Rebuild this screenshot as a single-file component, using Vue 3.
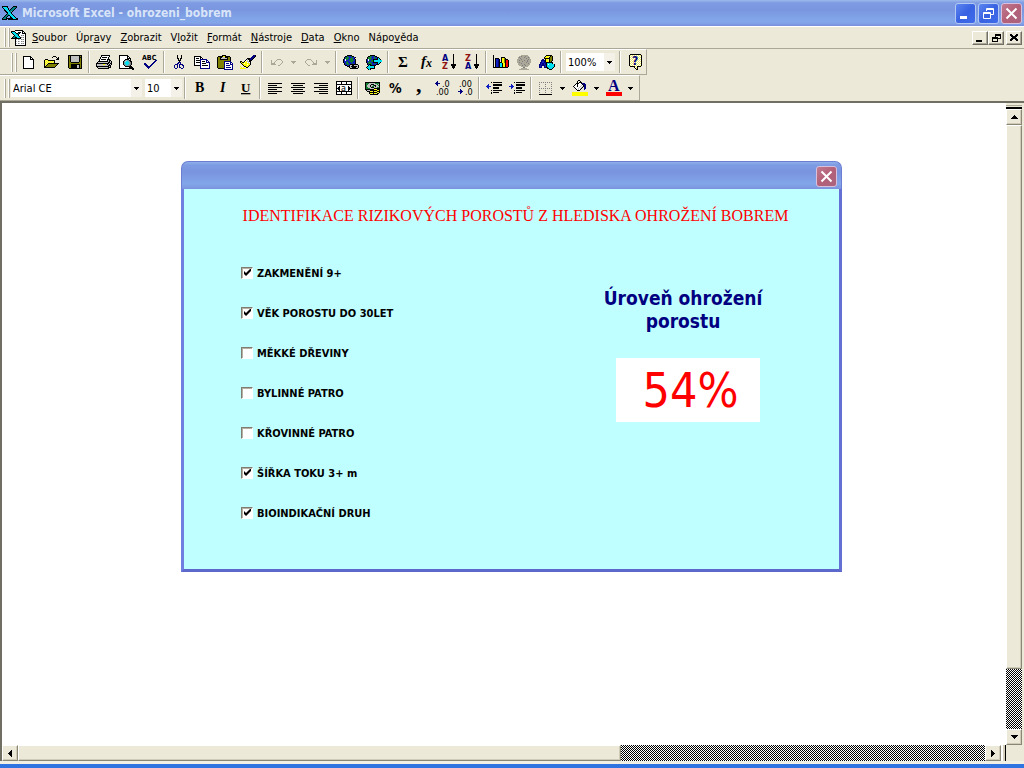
<script setup>
import { h, ref } from 'vue'

const palette = {
  k: '#000000', w: '#ffffff', n: '#000080', y: '#ffff00', Y: '#f0ee6a', g: '#808080',
  l: '#c0c0c0', o: '#808000', t: '#008080', c: '#00e0f0', r: '#ff0000', m: '#800000',
  e: '#108030', b: '#1020c0', d: '#aca899', s: '#6aa0a8'
}

function icon(map, texts = []) {
  const rows = map.trim().split('\n').map((r) => r.trim())
  const paths = {}
  rows.forEach((row, y) => {
    for (let x = 0; x < row.length;) {
      const key = row[x]
      let end = x + 1
      while (end < row.length && row[end] === key) end++
      if (palette[key]) {
        const n = end - x
        paths[key] = (paths[key] || '') + `M${x} ${y}h${n}v1h-${n}z`
      }
      x = end
    }
  })
  return {
    w: Math.max(...rows.map((r) => r.length)),
    h: rows.length,
    layers: Object.entries(paths).map(([key, d]) => ({ d, fill: palette[key] })),
    texts
  }
}

const blank = Array(16).fill('................').join('\n')

const icons = {
  logo: icon(`
    kkkkkk.....kkkk.
    kcccck....ktttk.
    .kcccck..ktttk..
    ..kccck.ktttk...
    ..kkcccktttk....
    ...kkccttsk.....
    ....kkcctk......
    .....kccck......
    ....kttccck.....
    ...kttkkccck....
    ..kttk..kccck...
    .kttk...kkccck..
    ktttkkkkkkkccckk
    kkkkk.kkkkkkkkkk`),
  doc: icon(`
    ....kkkkkkkk....
    kkkkwwwwwwwkk...
    kccckwwkkkwkwk..
    .kccckktkwwkkkk.
    ..kccctkwwwwwwk.
    ...kccckwwglgwk.
    ..kttccckwwwwwk.
    .kttkkccckglgwk.
    kkkkkkkkkkwwwwk.
    ....klwglwglgwk.
    ....kwwwwwwwwwk.
    ....klwglwglgwk.
    ....kwwwwwwwwwk.
    ....klwglwglgwk.
    ....kwwwwwwwwwk.
    ....kkkkkkkkkkk.`),
  new: icon(`
    kkkkkkkk...
    kwwwwwwkk..
    kwwwwwwkwk.
    kwwwwwwkkkk
    kwwwwwwwwwk
    kwwwwwwwwwk
    kwwwwwwwwwk
    kwwwwwwwwwk
    kwwwwwwwwwk
    kwwwwwwwwwk
    kwwwwwwwwwk
    kwwwwwwwwwk
    kkkkkkkkkkk`),
  open: icon(`
    .........kkk....
    ........k...k.k.
    .............kk.
    .kkk........kkk.
    kyYykkkkkkk.....
    kYyYyYyYyYk.....
    kyYyYyYyYyk.....
    kYyYkkkkkkkkkkk.
    kyYkoooooooook..
    kYkoooooooook...
    kkoooooooook....
    kkkkkkkkkkk.....`),
  save: icon(`
    kkkkkkkkkkkkkk
    kokllllllllkok
    kokllllllllkkk
    kokllllllllkok
    kokllllllllkok
    kokllllllllkok
    kokllllllllkok
    kookkkkkkkkook
    kooooooooooook
    kookkkkkkkkkok
    kookkkkkkllkok
    kookkkkkkllkok
    kookkkkkkllkok
    .kkkkkkkkkkkkk`),
  print: icon(`
    .....kkkkkkkkk..
    .....kwwwwwwwk..
    ....kwkkkkkwk...
    ....kwwwwwwwk...
    ...kwkkkkkwkkk..
    ...kwwwwwwwklkk.
    ..kkkkkkkkkklklk
    .kllllllllllkklk
    kkkkkkkkkkkkklkk
    kllllllyyllklklk
    klllllllllllkkk.
    kkkkkkkkkkkkklk.
    .kllllllllllkkk.
    ..kkkkkkkkkkk...`),
  preview: icon(`
    kkkkkkkkk.......
    kwwwwwwwkk......
    kwwwwwwwkwk.....
    kwwwwwwwkkkk....
    kwwwwwkkkkwk....
    kwwwwkslsskk....
    kwwwkslccsskk...
    kwwwksccccsgk...
    kwwwksccccsgk...
    kwwwkssccssgk...
    kwwwwkssssgk....
    kwwwwwkkkkkkk...
    kwwwwwwwwwkkkk..
    kkkkkkkkkkkkkkk.
    .............kk.`),
  spell: icon(`
    ................
    ................
    ................
    ................
    ................
    ................
    .............nn.
    ............nn..
    ...........nn...
    ..nn......nn....
    ..nnn....nn.....
    ...nnn..nn......
    ....nnnnn.......
    .....nnn........
    ......n.........
    ................`, [{ t: 'ABC', x: 0, y: 6, s: 7, f: '#000000', b: 700 }]),
  cut: icon(`
    ...k...k..
    ...k...k..
    ...k...k..
    ...kk.kk..
    ....k.k...
    ....kkk...
    .....k....
    ....nnn...
    ...nn.n...
    .nnn.nnnn.
    n..n.n..nn
    n..n.n...n
    n..n.nn..n
    .nn....nn.`),
  copy: icon(`
    kkkkkkk.........
    kwwwwwkk........
    kwkkkwkwk.......
    kwwwwwnnnnnnn...
    kwkkkknwwwwwnn..
    kwwwwwnwkkkwnwn.
    kwkkkknwwwwwnnnn
    kwwwwwnwkkkkwwwn
    kwwwwwnwwwwwwwwn
    kkkkkknwkkkkkkwn
    ......nwwwwwwwwn
    ......nwwwwwwwwn
    ......nnnnnnnnnn`),
  paste: icon(`
    .....kkkk.......
    .kkkkkyykkkkk...
    kookklllkkkook..
    kookllllllkook..
    kookkkkkkkkook..
    kooooooooooook..
    koooooonnnnnnn..
    koooooonwwwwwnn.
    koooooonwnnnwnwn
    koooooonwwwwwnnn
    koooooonwnnnnwwn
    koooooonwwwwwwwn
    koooooonwnnnnnwn
    .kkkkkknwwwwwwwn
    .......nnnnnnnnn`),
  brush: icon(`
    .............nnk
    ............nnnk
    ...........nnnk.
    .......kkknnnk..
    ......klkknnk...
    .....kwlwkkk....
    kk..kwyllkk.....
    kykkyyywlwk.....
    .kyywyyyylk.....
    ..kyyyywyyk.....
    ...kyyyyyk......
    y...kkyyk.......
    .y.y..kk........
    yyyyyy..........`),
  undo: icon(`
    ......dddd..
    d....d....d.
    d...d......d
    d..d.......d
    dddd......d.
    ddddd....d..
    .......dd...`),
  redo: icon(`
    ..dddd......
    .d....d....d
    d......d...d
    d.......d..d
    .d......dddd
    ..d....ddddd
    ...dd.......`),
  link: icon(`
    ....kkkkk.......
    ..kkebbbekk.....
    .kbeeebbbebbk...
    .keeeebeeebk....
    kbweebbeeebbk...
    kbwbbbeeeeebk...
    kbbbebbeeebbk...
    kbbeebbbebbbk...
    .kbeeebbbebbk...
    .kbbeebkkkkkkkk.
    ..kkbbkllkkllllk
    ....kkklkkkkkklk
    ......kllkkkkllk
    .......kkkkkkkk.`),
  web: icon(`
    ....kkkkk.......
    ..kkeebbekk.....
    .keeebbbebbkk...
    .keeeebbeebkck..
    kbweebbkkkkkcck.
    kbwbbeekcccccccc
    kbbebeekcccccccc
    kbeeebbkkkkkcck.
    .keeeebbebbkck..
    .kbkkebbbbkkk...
    ..kckkkkkk......
    .kcccccck.......
    kccccccck.......
    .kcckkkkk.......
    ..kck...........`),
  sigma: icon(blank, [{ t: 'Σ', x: 3, y: 13, s: 15, f: '#000000', b: 700, serif: true }]),
  fx: icon(blank, [{ t: 'f', x: 3, y: 12, s: 15, f: '#000000', b: 700, serif: true, i: true }, { t: 'x', x: 8, y: 13, s: 12, f: '#000000', b: 700, serif: true, i: true }]),
  az: icon(`
    ............k...
    ............k...
    ............k...
    ............k...
    ............k...
    ............k...
    ............k...
    ............k...
    ............k...
    ............k...
    ..........kkkkk.
    ..........kkkkk.
    ...........kkk..
    ...........kkk..
    ............k...
    ................`, [{ t: 'A', x: 1, y: 7, s: 9, f: '#000080', b: 700 }, { t: 'Z', x: 1, y: 15, s: 9, f: '#901010', b: 700 }]),
  chart: icon(`
    k...............
    k...............
    k.......kkkk....
    k.kkkk..kyyok...
    k.kbbnk.kyyokkk.
    k.kbbnk.kyyokrrk
    k.kbbnk.kyyokrrk
    k.kbbnkkkyyokrrk
    k.kbbnkcckyykrrk
    k.kbbnkcckyykrrk
    k.kbbnkcckyykrrk
    k.kbbnkcckyykrrk
    kkkkkkkkkkkkkkk.
    ................`),
  map: icon(`
    ....ddddddd...
    ..ddgdddgddd..
    .dgddddgdddgd.
    .ddgdddddgddd.
    ddddgddddddgdd
    ddgddddgddgddd
    dddddgddddgddd
    ddgddddddgdddd
    .dddgddddddgd.
    .ddddddgddddd.
    ..dddgddgddd..
    ....ddddddd...
    ......gg......
    ....dddddd....
    ..dddddddddd..`),
  draw: icon(`
    .......kkkkkk...
    ......kyyyYkok..
    .....kyyyYkook..
    .....kkkkkkook..
    ...nn.kyyYkook..
    ..nnnnkyyYkook..
    ..nbbnkyyYkok...
    .nnbbnnkkkkkkk..
    .nbnnbnkccccck..
    nnbnnbnkcwccccck
    nbnnnnbkccccccck
    nbn..nbkccccccck
    nnn..nnkkccccck.
    ........kkccck..
    ..........kkk...`),
  help: icon(`
    ..kkkkkkkkkkk.
    .kYwYwYwYwYwYk
    .kwYwYwYwYwYwk
    .kYwYwYwYwYwYk
    .kwYwYwYwYwYwk
    .kYwYwYwYwYwYk
    .kwYwYwYwYwYwk
    .kYwYwYwYwYwYk
    .kwYwYwYwYwYwk
    .kYwYwYwYwYwYk
    .kwYwYwYwYwYwk
    .kYwYwYwYwYwYk
    ..kkkkkYwkkkk.
    ......kwYk....
    .......kYk....
    ........kk....`, [{ t: '?', x: 4, y: 11, s: 12, f: '#000080', b: 700 }]),
  left: icon(`
    kkkkkkkkkkkkkk
    ..............
    kkkkkkkkk.....
    ..............
    kkkkkkkkkkkkkk
    ..............
    kkkkkkkkk.....
    ..............
    kkkkkkkkkkkkkk
    ..............
    kkkkkkkkk.....`),
  center: icon(`
    kkkkkkkkkkkkkk
    ..............
    ..kkkkkkkkkk..
    ..............
    kkkkkkkkkkkkkk
    ..............
    ..kkkkkkkkkk..
    ..............
    kkkkkkkkkkkkkk
    ..............
    ..kkkkkkkkkk..`),
  right: icon(`
    kkkkkkkkkkkkkk
    ..............
    .....kkkkkkkkk
    ..............
    kkkkkkkkkkkkkk
    ..............
    .....kkkkkkkkk
    ..............
    kkkkkkkkkkkkkk
    ..............
    .....kkkkkkkkk`),
  merge: icon(`
    kkkkkkkkkkkkkkkk
    kwwwwkwwwwkwwwwk
    kwwwwkwwwwkwwwwk
    kkkkkkkkkkkkkkkk
    kwwwwwwwwwwwwwwk
    kwwkwwwwwwwwkwwk
    kwkkwwwwwwwwkkwk
    kkkkwwwwwwwwkkkk
    kwkkwwwwwwwwkkwk
    kwwkwwwwwwwwkwwk
    kkkkkkkkkkkkkkkk
    kwwwwkwwwwkwwwwk
    kwwwwkwwwwkwwwwk
    kkkkkkkkkkkkkkkk`, [{ t: 'a', x: 5, y: 10, s: 9, f: '#000000', b: 400 }]),
  money: icon(`
    kkkkkkkkkkkkkkk.
    keeelllllleeeek.
    keelllkkklllelk.
    kelllkllekkllek.
    kelllkleelklllk.
    keelllkkkllleek.
    keeeellllkkkkkk.
    kkkkkkkkkyyYkkk.
    .klllkkkkkkkyyk.
    ..kkkyyYkyyYkkk.
    ....kkkkkkkkyYk.
    ....kyyYkyyYkk..
    .....kkkkkkkk...`),
  percent: icon(blank, [{ t: '%', x: 1, y: 13, s: 14, f: '#000000', b: 700 }]),
  comma: icon(blank, [{ t: ',', x: 5, y: 12, s: 22, f: '#000000', b: 700, serif: true }]),
  incDec: icon(`
    ................
    ...n............
    ..nn............
    .nnnnn..........
    ..nn............
    ...n............
    ................
    ................
    ................
    ................
    ................
    ................
    ................
    ................
    ................
    ................`, [{ t: '.0', x: 8, y: 7, s: 9, f: '#000000', b: 400 }, { t: '.00', x: 2, y: 15, s: 9, f: '#000000', b: 400 }]),
  decDec: icon(`
    ................
    ................
    ................
    ................
    ................
    ................
    ................
    ................
    ................
    ...n............
    ...nn...........
    .nnnnn..........
    ...nn...........
    ...n............
    ................
    ................`, [{ t: '.00', x: 2, y: 7, s: 9, f: '#000000', b: 400 }, { t: '.0', x: 8, y: 15, s: 9, f: '#000000', b: 400 }]),
  outdent: icon(`
    .....k.kkkkkkkkk
    ................
    ..b....kkkkkkkkk
    .bb....kkkkkkkkk
    bbbbb...........
    .bb....kkkkkk...
    ..b....kkkkkk...
    ................
    .....k.kkkkkkkkk
    ................
    .....k.kkkkkk...
    .....k..........`),
  indent: icon(`
    .....k.kkkkkkkkk
    ................
    ..b....kkkkkkkkk
    ..bb...kkkkkkkkk
    bbbbb...........
    ..bb...kkkkkk...
    ..b....kkkkkk...
    ................
    .....k.kkkkkkkkk
    ................
    .....k.kkkkkk...
    .....k..........`),
  borders: icon(`
    g.g.g.g.g.g.g
    .............
    g.....g.....g
    .............
    g.....g.....g
    .............
    g.g.g.g.g.g.g
    .............
    g.....g.....g
    .............
    g.....g.....g
    .............
    kkkkkkkkkkkkk`),
  fill: icon(`
    ......kk........
    .....k..k.......
    .....k.kkk......
    ....kkkwwknnn...
    ...kwkwwwwknnn..
    ..kwwkwwwlwknn..
    .kwwwkwwlwlknn..
    ..kwwwwlwlk.nn..
    ...kwwlwlk..nn..
    ....kwlwk...n...
    .....kkk........
    ................
    yyyyyyyyyyyyyyyy
    yyyyyyyyyyyyyyyy
    yyyyyyyyyyyyyyyy
    yyyyyyyyyyyyyyyy`),
  font: icon(`
    ................
    ................
    ................
    ................
    ................
    ................
    ................
    ................
    ................
    ................
    ................
    ................
    rrrrrrrrrrrrrrrr
    rrrrrrrrrrrrrrrr
    rrrrrrrrrrrrrrrr
    rrrrrrrrrrrrrrrr`, [{ t: 'A', x: 2, y: 11, s: 16, f: '#000080', b: 700, serif: true }]),
  bold: icon(blank, [{ t: 'B', x: 3, y: 12, s: 14, f: '#000000', b: 700, serif: true }]),
  italic: icon(blank, [{ t: 'I', x: 5, y: 12, s: 14, f: '#000000', b: 700, serif: true, i: true }]),
  underline: icon(blank, [{ t: 'U', x: 3, y: 12, s: 13, f: '#000000', b: 700, serif: true, u: true }]),
  down: icon(`
    kkkkk
    .kkk.
    ..k..`),
  downGray: icon(`
    ddddd
    .ddd.
    ..d..`),
  up: icon(`
    ...k...
    ..kkk..
    .kkkkk.
    kkkkkkk`),
  downBig: icon(`
    kkkkkkk
    .kkkkk.
    ..kkk..
    ...k...`),
  prev: icon(`
    ...k
    ..kk
    .kkk
    kkkk
    .kkk
    ..kk
    ...k`),
  next: icon(`
    k...
    kk..
    kkk.
    kkkk
    kkk.
    kk..
    k...`),
  mdiMin: icon(`
    ........
    ........
    ........
    ........
    ........
    ........
    kkkkkk..
    kkkkkk..`),
  mdiRestore: icon(`
    ...kkkkkk
    ...kkkkkk
    ...k....k
    kkkkkk..k
    kkkkkkkkk
    k....k...
    k....k...
    kkkkkk...`),
  mdiClose: icon(`
    kk....kk
    kkk..kkk
    .kkkkkk.
    ..kkkk..
    .kkkkkk.
    kkk..kkk
    kk....kk`)
}
icons.za = {
  ...icons.az,
  texts: [{ t: 'Z', x: 1, y: 7, s: 9, f: '#901010', b: 700 }, { t: 'A', x: 1, y: 15, s: 9, f: '#000080', b: 700 }]
}

const standard = [
  ['new', 'Nový'], ['open', 'Otevřít'], ['save', 'Uložit'], null,
  ['print', 'Tisk'], ['preview', 'Náhled'], ['spell', 'Pravopis'], null,
  ['cut', 'Vyjmout'], ['copy', 'Kopírovat'], ['paste', 'Vložit'], ['brush', 'Kopírovat formát'], null,
  ['undo', 'Zpět'], ['downGray', 'Seznam zpět', true], ['redo', 'Znovu'], ['downGray', 'Seznam znovu', true], null,
  ['link', 'Hypertextový odkaz'], ['web', 'Web'], null,
  ['sigma', 'Součet'], ['fx', 'Funkce'], ['az', 'Seřadit vzestupně'], ['za', 'Seřadit sestupně'], null,
  ['chart', 'Graf'], ['map', 'Mapa'], ['draw', 'Kreslení'], null
]
const formatting = [
  null, ['bold', 'Tučné'], ['italic', 'Kurzíva'], ['underline', 'Podtržené'], null,
  ['left', 'Vlevo'], ['center', 'Na střed'], ['right', 'Vpravo'], ['merge', 'Sloučit'], null,
  ['money', 'Měna'], ['percent', 'Procenta'], ['comma', 'Oddělovač'], ['incDec', 'Přidat místo'], ['decDec', 'Odebrat místo'], null,
  ['outdent', 'Zmenšit odsazení'], ['indent', 'Zvětšit odsazení'], null,
  ['borders', 'Ohraničení'], ['down', 'Druh ohraničení', true], ['fill', 'Výplň'], ['down', 'Barva výplně', true],
  ['font', 'Písmo'], ['down', 'Barva písma', true]
]

const menu = [
  ['', 'S', 'oubor'], ['Úpr', 'a', 'vy'], ['', 'Z', 'obrazit'], ['V', 'l', 'ožit'], ['', 'F', 'ormát'],
  ['', 'N', 'ástroje'], ['', 'D', 'ata'], ['', 'O', 'kno'], ['Nápo', 'v', 'ěda']
]

const factors = ref([
  { label: 'ZAKMENĚNÍ 9+', on: true },
  { label: 'VĚK POROSTU DO 30LET', on: true },
  { label: 'MĚKKÉ DŘEVINY', on: false },
  { label: 'BYLINNÉ PATRO', on: false },
  { label: 'KŘOVINNÉ PATRO', on: false },
  { label: 'ŠÍŘKA TOKU 3+ m', on: true },
  { label: 'BIOINDIKAČNÍ DRUH', on: true }
])

const PixelIcon = (props) => {
  const i = icons[props.name]
  return h('svg', { class: 'pixel-icon', width: i.w, height: i.h, viewBox: `0 0 ${i.w} ${i.h}`, 'shape-rendering': 'crispEdges', 'aria-hidden': 'true' }, [
    ...i.layers.map((l) => h('path', { d: l.d, fill: l.fill })),
    ...i.texts.map((t) => h('text', {
      x: t.x, y: t.y, fill: t.f, 'font-size': t.s, 'font-weight': t.b,
      'font-style': t.i ? 'italic' : 'normal',
      'text-decoration': t.u ? 'underline' : 'none',
      'font-family': t.serif ? '"Liberation Serif", serif' : '"DejaVu Sans Condensed", "DejaVu Sans", sans-serif'
    }, t.t))
  ])
}
PixelIcon.props = ['name']
</script>

<template>
  <div class="app">
    <header class="titlebar">
      <PixelIcon name="logo" />
      <h1>Microsoft Excel - ohrozeni_bobrem</h1>
      <button class="caption" aria-label="Minimalizovat">
        <svg width="19" height="19"><path d="M4 12h7v3H4z" fill="#fff" /></svg>
      </button>
      <button class="caption" aria-label="Obnovit">
        <svg width="19" height="19" fill="none" stroke="#fff"><path d="M7.500 7V4.500H14.500V10.500H12M7 5.500H15M4.500 8.500H11.500V14.500H4.500zM4 9.500H12" /></svg>
      </button>
      <button class="caption close" aria-label="Zavřít">
        <svg width="19" height="19" stroke="#fff" stroke-width="2"><path d="M4.500 4.500L14.500 14.500M14.500 4.500L4.500 14.500" /></svg>
      </button>
    </header>

    <nav class="menubar">
      <span class="grip"></span>
      <PixelIcon name="doc" />
      <div class="menus">
        <button v-for="m in menu" :key="m.join('')">{{ m[0] }}<u>{{ m[1] }}</u>{{ m[2] }}</button>
      </div>
      <button class="mdi" aria-label="Minimalizovat sešit"><PixelIcon name="mdiMin" /></button>
      <button class="mdi" aria-label="Obnovit sešit"><PixelIcon name="mdiRestore" /></button>
      <button class="mdi apart" aria-label="Zavřít sešit"><PixelIcon name="mdiClose" /></button>
    </nav>

    <div class="toolbar inset">
      <span class="grip"></span>
      <template v-for="(b, n) in standard" :key="n">
        <button v-if="b" class="tool" :class="{ narrow: b[2] }" :aria-label="b[1]"><PixelIcon :name="b[0]" /></button>
        <span v-else class="sep"></span>
      </template>
      <label class="combo zoom">
        <select aria-label="Lupa"><option>100%</option></select>
        <PixelIcon name="down" />
      </label>
      <span class="sep"></span>
      <button class="tool" aria-label="Nápověda"><PixelIcon name="help" /></button>
    </div>

    <div class="toolbar">
      <span class="grip"></span>
      <label class="combo family">
        <select aria-label="Písmo"><option>Arial CE</option></select>
        <PixelIcon name="down" />
      </label>
      <label class="combo size">
        <select aria-label="Velikost písma"><option>10</option></select>
        <PixelIcon name="down" />
      </label>
      <template v-for="(b, n) in formatting" :key="n">
        <button v-if="b" class="tool" :class="{ narrow: b[2] }" :aria-label="b[1]"><PixelIcon :name="b[0]" /></button>
        <span v-else class="sep"></span>
      </template>
    </div>

    <main class="sheet">
      <div class="canvas"></div>
      <div class="vscroll">
        <span class="vsplit"></span>
        <button class="arrow" aria-label="Nahoru"><PixelIcon name="up" /></button>
        <span class="thumb vthumb"></span>
        <span class="track vtrack"></span>
        <button class="arrow" aria-label="Dolů"><PixelIcon name="downBig" /></button>
      </div>
      <div class="hscroll">
        <button class="arrow" aria-label="Vlevo"><PixelIcon name="prev" /></button>
        <span class="thumb hthumb"></span>
        <span class="track htrack"></span>
        <button class="arrow" aria-label="Vpravo"><PixelIcon name="next" /></button>
        <span class="hsplit"></span>
      </div>
      <div class="corner"></div>
    </main>
    <div class="taskedge"></div>

    <section class="dialog" role="dialog" aria-labelledby="dialog-title">
      <div class="dialog-bar">
        <button class="caption close" aria-label="Zavřít dialog">
          <svg width="19" height="19" stroke="#fff" stroke-width="2"><path d="M4.500 4.500L14.500 14.500M14.500 4.500L4.500 14.500" /></svg>
        </button>
      </div>
      <div class="dialog-body">
        <h2 id="dialog-title">IDENTIFIKACE RIZIKOVÝCH POROSTŮ Z HLEDISKA OHROŽENÍ BOBREM</h2>
        <div class="columns">
          <div class="factors">
            <label v-for="f in factors" :key="f.label"><input v-model="f.on" type="checkbox">{{ f.label }}</label>
          </div>
          <div class="result">
            <h3>Úroveň ohrožení porostu</h3>
            <output>54%</output>
          </div>
        </div>
      </div>
    </section>
  </div>
</template>

<style>
html, body { height: 100%; background: #ece9d8; }
.pixel-icon { display: block; flex: none; overflow: visible; }
</style>

<style scoped>
* { box-sizing: border-box; }
.app {
  position: relative;
  display: flex;
  flex-direction: column;
  height: 100vh;
  min-height: 600px;
  overflow: hidden;
  background: #ece9d8;
  color: #000;
  font-family: "DejaVu Sans Condensed", "DejaVu Sans", sans-serif;
  font-size: 11px;
}
button { margin: 0; padding: 0; border: 0; background: none; font: inherit; color: inherit; }
h1, h2, h3 { margin: 0; }
.titlebar {
  display: flex;
  align-items: center;
  gap: 2px;
  height: 26px;
  padding: 0 2px;
  background: linear-gradient(#9db9eb 0, #7d9be2 3px, #7a96df 10px, #82a6e9 20px, #82a4e8 23px, #7b8edc 26px);
}
.titlebar h1 {
  flex: 1;
  padding-left: 2px;
  font: bold 12px/26px "DejaVu Sans Condensed", sans-serif;
  color: #d8e4f8;
}
.caption {
  display: block;
  width: 21px;
  height: 21px;
  border: 1px solid #b4c8f4;
  border-radius: 3px;
  background: linear-gradient(135deg, #5c86f0, #3862e2 50%, #3f6bea);
}
.caption svg { display: block; }
.caption.close { border-color: #d8c0dc; background: linear-gradient(135deg, #bf7a90, #b46078 50%, #a9647f); }
.menubar {
  display: flex;
  align-items: center;
  height: 23px;
  padding: 0 2px 0 4px;
  border-top: 1px solid #fff;
  border-bottom: 1px solid #aca899;
}
.grip {
  flex: none;
  width: 6px;
  height: 19px;
  border-left: 1px solid #fff;
  border-right: 1px solid #aca899;
  background: linear-gradient(90deg, #aca899 1px, #ece9d8 1px 3px, #fff 3px);
}
.menubar > svg { margin-left: 1px; }
.menus { display: flex; flex: 1; gap: 9px; padding-left: 5px; }
.menus button { line-height: 20px; }
.mdi {
  display: flex;
  align-items: center;
  justify-content: center;
  width: 16px;
  height: 14px;
  border: 1px solid;
  border-color: #fff #716f64 #716f64 #fff;
  box-shadow: inset -1px -1px #aca899;
}
.apart { margin-left: 2px; }
.toolbar {
  display: flex;
  align-items: center;
  align-self: flex-start;
  height: 26px;
  padding: 0 3px 0 4px;
  border: solid;
  border-width: 1px 1px 1px 0;
  border-color: #fff #aca899 #aca899 #fff;
}
.toolbar.inset { padding: 0 0 0 11px; }
.tool {
  display: flex;
  flex: none;
  align-items: center;
  justify-content: center;
  width: 23px;
  height: 22px;
}
.tool.narrow { width: 11px; }
.sep {
  flex: none;
  width: 2px;
  height: 22px;
  margin: 0 2px;
  border-left: 1px solid #aca899;
  background: #fff;
}
.combo { display: flex; align-items: center; height: 18px; padding-right: 3px; background: linear-gradient(90deg, #fff calc(100% - 11px), #f4f2e8 calc(100% - 11px)); }
.combo select {
  flex: 1;
  min-width: 0;
  height: 18px;
  padding: 0 2px;
  border: 0;
  outline: 0;
  appearance: none;
  background: none;
  font: inherit;
  color: #000;
}
.zoom { width: 49px; margin: 0 2px; }
.family { width: 131px; margin: 0 3px 0 1px; }
.size { width: 37px; }
.sheet {
  display: grid;
  flex: 1;
  grid-template-columns: minmax(0, 1fr) 16px;
  grid-template-rows: minmax(0, 1fr) 16px;
  padding: 0 2px 0 0;
  border: solid #716f64;
  border-width: 2px 0 0 2px;
}
.canvas { background: #fff; }
.vscroll { display: flex; flex-direction: column; padding-top: 2px; }
.vsplit { height: 4px; border-top: 1px solid #aca899; border-bottom: 2px solid #000; }
.arrow {
  display: flex;
  flex: none;
  align-items: center;
  justify-content: center;
  width: 16px;
  height: 16px;
}
.arrow, .thumb {
  border: 1px solid;
  border-color: #fff #8a8775 #8a8775 #fff;
  background: #ece9d8;
  box-shadow: inset -1px -1px #cfcbb8;
}
.hscroll { display: flex; }
.vthumb { flex: 542; }
.vtrack { flex: 60; }
.hthumb { flex: 602; }
.htrack { flex: 364; }
.track { background: repeating-conic-gradient(#fff 0 25%, #000 0 50%) 0 0 / 2px 2px; }
.hsplit { width: 5px; border-left: 2px solid #fff; border-right: 1px solid #000; background: #d4d0bc; }
.corner { background: #ece9d8; }
.taskedge { height: 7px; border-top: 3px solid #f2f0e4; background: #2f74e0; }
.dialog {
  position: absolute;
  top: 161px;
  left: 0;
  right: 1px;
  width: 661px;
  margin: 0 auto;
}
.dialog-bar {
  display: flex;
  align-items: center;
  justify-content: flex-end;
  height: 28px;
  padding: 2px 4px 0 0;
  border: 1px solid #6b7ed4;
  border-bottom: 0;
  border-radius: 7px 7px 0 0;
  background: linear-gradient(#8fb0ea 0, #7d9be2 3px, #7a94df 10px, #82a6e9 22px, #7b8edc 28px);
}
.dialog-body {
  padding: 17px 0 46px;
  border: 3px solid #7080e0;
  border-top: 0;
  border-right-color: #6470d4;
  border-bottom-color: #5c68cc;
  background: #c0ffff;
}
.dialog-body h2 {
  padding-left: 8px;
  font: 16px/20px "Liberation Serif", serif;
  color: #f00;
  text-align: center;
}
.columns { display: flex; justify-content: space-between; padding: 37px 76px 0 57px; }
.factors { display: flex; flex-direction: column; gap: 20px; }
.factors label { display: flex; align-items: center; gap: 4px; height: 20px; font-weight: bold; }
.factors input {
  position: relative;
  width: 12px;
  height: 12px;
  margin: 0;
  border: 1px solid;
  border-color: #807c70 #fff #fff #807c70;
  appearance: none;
  background: #fff;
  box-shadow: inset 1px 1px #b4b0a4;
}
.factors input:checked::after {
  position: absolute;
  top: 1px;
  left: 2px;
  width: 7px;
  height: 7px;
  background: #000;
  clip-path: polygon(0 2px, 2px 4px, 6px 0, 7px 0, 7px 2px, 2px 7px, 0 5px);
  content: "";
}
.result { display: flex; flex-direction: column; align-items: center; width: 160px; padding-top: 24px; }
.result h3 { font-size: 19px; line-height: 23px; color: #000080; text-align: center; }
.result output {
  width: 144px;
  margin: 25px 0 0 10px;
  padding-left: 5px;
  background: #fff;
  font-size: 48px;
  line-height: 64px;
  color: #f00;
  text-align: center;
}
</style>
